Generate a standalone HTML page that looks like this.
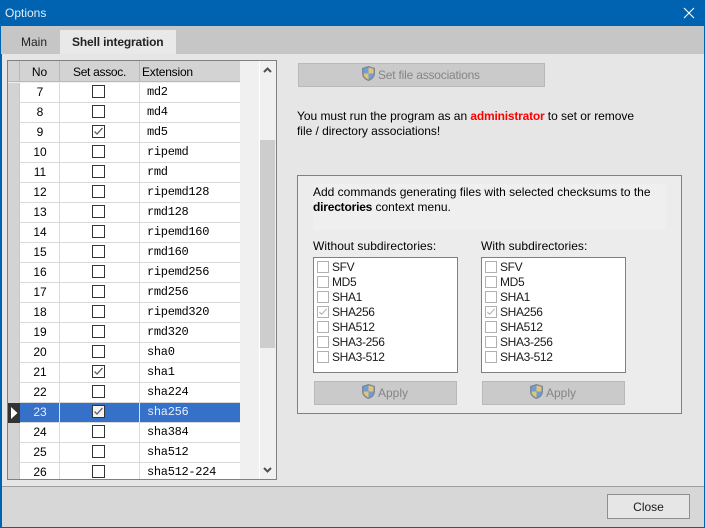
<!DOCTYPE html>
<html><head><meta charset="utf-8"><style>
*{box-sizing:border-box}
html,body{margin:0;padding:0;width:705px;height:528px;overflow:hidden;background:#e6e6e6}
body{position:relative;font:12px/15px "Liberation Sans",sans-serif;color:#000}
div,span,svg{position:absolute}
.t{white-space:nowrap}
.r{left:8px;width:232px;height:20px;background:#fff;border-bottom:1px solid #d9d9d9}
.r .h{left:0;top:0;width:12px;height:20px;background:#d3d3d3;border-right:1px solid #c8c8c8}
.r .n{left:12px;top:2px;width:40px;text-align:center;border:0}
.r .l1{left:51px;top:0;width:1px;height:19px;background:#d9d9d9}
.r .l2{left:131px;top:0;width:1px;height:19px;background:#d9d9d9}
.r .c{left:84px;top:2px;width:13px;height:13px;border:1px solid #333;background:#fff}
.r .e{left:139px;top:2px;font:12px/15px "Liberation Mono",monospace;letter-spacing:-.3px;white-space:nowrap}
.c svg{left:0;top:0}
.s .n,.s .e{color:#e8eefa}
.s{background:#3571c9}
.s .c{background:#f4f4f4}
.lb{top:257px;width:145px;height:116px;background:#fff;border:1px solid #808080}
.k{left:3px;width:12px;height:12px;border:1px solid #b0b0b0;background:#fff}
.i{left:18px;white-space:nowrap;color:#1a1a1a;letter-spacing:-.35px}
.b{background:#cacaca;border:1px solid #b9b9b9;color:#858585;text-align:center}
</style></head><body>
<div style="left:0;top:0;width:705px;height:528px;border:1px solid #0063b1;border-top:0;border-left:2px solid #0063b1"></div>
<div style="left:0;top:0;width:705px;height:26px;background:#0063b1"></div>
<div class="t" style="left:5px;top:6px;color:#e4eef8">Options</div>
<svg style="left:683px;top:7px" width="12" height="12" viewBox="0 0 12 12"><path d="M1 1L11 11M11 1L1 11" stroke="#fff" stroke-width="1.1" fill="none"/></svg>
<div style="left:1px;top:26px;width:703px;height:28px;background:#c6c6c6"></div>
<div style="left:60px;top:30px;width:116px;height:24px;background:#e9e9e9"></div>
<div class="t" style="left:21px;top:35px;color:#222">Main</div>
<div class="t" style="left:72px;top:35px;font-weight:bold;letter-spacing:-.15px;color:#222">Shell integration</div>

<div style="left:7px;top:60px;width:270px;height:420px;border:1px solid #808080;background:#f0f0f0;overflow:hidden">
 <div style="left:0;top:0;width:232px;height:21px;background:#d3d3d3;border-bottom:1px solid #b8b8b8"></div>
 <div style="left:11px;top:0;width:1px;height:21px;background:#b8b8b8"></div>
 <div style="left:51px;top:0;width:1px;height:21px;background:#b8b8b8"></div>
 <div style="left:131px;top:0;width:1px;height:21px;background:#b8b8b8"></div>
 <div class="t" style="left:12px;top:4px;width:39px;text-align:center">No</div>
 <div class="t" style="left:52px;top:4px;width:79px;text-align:center;letter-spacing:-.3px">Set assoc.</div>
 <div class="t" style="left:134px;top:4px;letter-spacing:-.2px">Extension</div>
 <div style="left:251px;top:0;width:1px;height:418px;background:#fff"></div>
 <div style="left:252px;top:79px;width:15px;height:208px;background:#cdcdcd"></div>
 <svg style="left:255px;top:5px" width="9" height="8" viewBox="0 0 9 8"><path d="M1 6L4.500 2.500L8 6" stroke="#505050" stroke-width="2" fill="none"/></svg>
 <svg style="left:255px;top:405px" width="9" height="8" viewBox="0 0 9 8"><path d="M1 2L4.500 5.500L8 2" stroke="#505050" stroke-width="2" fill="none"/></svg>

 <div class="r" style="left:0;top:22px"><div class="h"></div><div class="l1"></div><div class="l2"></div><span class="n">7</span><span class="c"></span><span class="e">md2</span></div>
 <div class="r" style="left:0;top:42px"><div class="h"></div><div class="l1"></div><div class="l2"></div><span class="n">8</span><span class="c"></span><span class="e">md4</span></div>
 <div class="r" style="left:0;top:62px"><div class="h"></div><div class="l1"></div><div class="l2"></div><span class="n">9</span><span class="c"><svg width="11" height="11" viewBox="0 0 11 11"><path d="M1.500 5.500L4 8L9.500 2" stroke="#666" stroke-width="1.300" fill="none"/></svg></span><span class="e">md5</span></div>
 <div class="r" style="left:0;top:82px"><div class="h"></div><div class="l1"></div><div class="l2"></div><span class="n">10</span><span class="c"></span><span class="e">ripemd</span></div>
 <div class="r" style="left:0;top:102px"><div class="h"></div><div class="l1"></div><div class="l2"></div><span class="n">11</span><span class="c"></span><span class="e">rmd</span></div>
 <div class="r" style="left:0;top:122px"><div class="h"></div><div class="l1"></div><div class="l2"></div><span class="n">12</span><span class="c"></span><span class="e">ripemd128</span></div>
 <div class="r" style="left:0;top:142px"><div class="h"></div><div class="l1"></div><div class="l2"></div><span class="n">13</span><span class="c"></span><span class="e">rmd128</span></div>
 <div class="r" style="left:0;top:162px"><div class="h"></div><div class="l1"></div><div class="l2"></div><span class="n">14</span><span class="c"></span><span class="e">ripemd160</span></div>
 <div class="r" style="left:0;top:182px"><div class="h"></div><div class="l1"></div><div class="l2"></div><span class="n">15</span><span class="c"></span><span class="e">rmd160</span></div>
 <div class="r" style="left:0;top:202px"><div class="h"></div><div class="l1"></div><div class="l2"></div><span class="n">16</span><span class="c"></span><span class="e">ripemd256</span></div>
 <div class="r" style="left:0;top:222px"><div class="h"></div><div class="l1"></div><div class="l2"></div><span class="n">17</span><span class="c"></span><span class="e">rmd256</span></div>
 <div class="r" style="left:0;top:242px"><div class="h"></div><div class="l1"></div><div class="l2"></div><span class="n">18</span><span class="c"></span><span class="e">ripemd320</span></div>
 <div class="r" style="left:0;top:262px"><div class="h"></div><div class="l1"></div><div class="l2"></div><span class="n">19</span><span class="c"></span><span class="e">rmd320</span></div>
 <div class="r" style="left:0;top:282px"><div class="h"></div><div class="l1"></div><div class="l2"></div><span class="n">20</span><span class="c"></span><span class="e">sha0</span></div>
 <div class="r" style="left:0;top:302px"><div class="h"></div><div class="l1"></div><div class="l2"></div><span class="n">21</span><span class="c"><svg width="11" height="11" viewBox="0 0 11 11"><path d="M1.500 5.500L4 8L9.500 2" stroke="#666" stroke-width="1.300" fill="none"/></svg></span><span class="e">sha1</span></div>
 <div class="r" style="left:0;top:322px"><div class="h"></div><div class="l1"></div><div class="l2"></div><span class="n">22</span><span class="c"></span><span class="e">sha224</span></div>
 <div class="r s" style="left:0;top:342px"><div class="h" style="background:#333;border-right:0;height:20px"></div><svg style="left:3px;top:4px" width="7" height="12" viewBox="0 0 7 12"><path d="M0 0L6.500 6L0 12Z" fill="#fff"/></svg><div class="l1" style="background:#d9e2f2"></div><div class="l2" style="background:#d9e2f2"></div><span class="n">23</span><span class="c"><svg width="11" height="11" viewBox="0 0 11 11"><path d="M1.500 5.500L4 8L9.500 2" stroke="#666" stroke-width="1.300" fill="none"/></svg></span><span class="e">sha256</span></div>
 <div class="r" style="left:0;top:362px"><div class="h"></div><div class="l1"></div><div class="l2"></div><span class="n">24</span><span class="c"></span><span class="e">sha384</span></div>
 <div class="r" style="left:0;top:382px"><div class="h"></div><div class="l1"></div><div class="l2"></div><span class="n">25</span><span class="c"></span><span class="e">sha512</span></div>
 <div class="r" style="left:0;top:402px;border-bottom:0"><div class="h"></div><div class="l1"></div><div class="l2"></div><span class="n">26</span><span class="c"></span><span class="e">sha512-224</span></div>
</div>

<div class="b" style="left:298px;top:63px;width:247px;height:24px"></div>
<svg style="left:361px;top:65px" width="15" height="17" viewBox="0 0 15 17"><path d="M7.500 1L14 3V8.500C14 12 11 15 7.500 16C4 15 1 12 1 8.500V3Z" fill="#7a8899"/><path d="M7.500 2.500V8.500H2.500V3.700Z" fill="#6f9fd0"/><path d="M7.500 2.500L12.500 3.700V8.500H7.500Z" fill="#e3c27a"/><path d="M2.500 8.500H7.500V14.500C5 13.500 2.500 11.500 2.500 8.500Z" fill="#e3c27a"/><path d="M12.500 8.500H7.500V14.500C10 13.500 12.500 11.500 12.500 8.500Z" fill="#6f9fd0"/></svg>
<div class="t" style="left:378px;top:68px;color:#858585;letter-spacing:-.2px">Set file associations</div>

<div class="t" style="left:297px;top:109px;letter-spacing:-.03px">You must run the program as an <b style="color:#f00;letter-spacing:-.2px">administrator</b> to set or remove</div>
<div class="t" style="left:297px;top:124px;letter-spacing:-.03px">file / directory associations!</div>

<div style="left:297px;top:175px;width:385px;height:239px;border:1px solid #808080;background:#ececec"></div>
<div style="left:313px;top:184px;width:353px;height:46px;background:#efefef"></div>
<div class="t" style="left:313px;top:185px">Add commands generating files with selected checksums to the</div>
<div class="t" style="left:313px;top:200px"><b style="letter-spacing:-.2px">directories</b> context menu.</div>
<div class="t" style="left:313px;top:239px;letter-spacing:.05px">Without subdirectories:</div>
<div class="t" style="left:481px;top:239px;letter-spacing:.05px">With subdirectories:</div>

<div class="lb" style="left:313px">
 <span class="k" style="top:3px"></span><span class="i" style="top:2px">SFV</span>
 <span class="k" style="top:18px"></span><span class="i" style="top:17px">MD5</span>
 <span class="k" style="top:33px"></span><span class="i" style="top:32px">SHA1</span>
 <span class="k" style="top:48px"><svg style="left:0;top:0" width="10" height="10" viewBox="0 0 11 11"><path d="M1.500 5.500L4 8L9.500 2" stroke="#b0b0b0" stroke-width="1.200" fill="none"/></svg></span><span class="i" style="top:47px">SHA256</span>
 <span class="k" style="top:63px"></span><span class="i" style="top:62px">SHA512</span>
 <span class="k" style="top:78px"></span><span class="i" style="top:77px">SHA3-256</span>
 <span class="k" style="top:93px"></span><span class="i" style="top:92px">SHA3-512</span>
</div>
<div class="lb" style="left:481px">
 <span class="k" style="top:3px"></span><span class="i" style="top:2px">SFV</span>
 <span class="k" style="top:18px"></span><span class="i" style="top:17px">MD5</span>
 <span class="k" style="top:33px"></span><span class="i" style="top:32px">SHA1</span>
 <span class="k" style="top:48px"><svg style="left:0;top:0" width="10" height="10" viewBox="0 0 11 11"><path d="M1.500 5.500L4 8L9.500 2" stroke="#b0b0b0" stroke-width="1.200" fill="none"/></svg></span><span class="i" style="top:47px">SHA256</span>
 <span class="k" style="top:63px"></span><span class="i" style="top:62px">SHA512</span>
 <span class="k" style="top:78px"></span><span class="i" style="top:77px">SHA3-256</span>
 <span class="k" style="top:93px"></span><span class="i" style="top:92px">SHA3-512</span>
</div>

<div class="b" style="left:314px;top:381px;width:143px;height:24px"></div>
<svg style="left:361px;top:383px" width="15" height="17" viewBox="0 0 15 17"><path d="M7.500 1L14 3V8.500C14 12 11 15 7.500 16C4 15 1 12 1 8.500V3Z" fill="#7a8899"/><path d="M7.500 2.500V8.500H2.500V3.700Z" fill="#6f9fd0"/><path d="M7.500 2.500L12.500 3.700V8.500H7.500Z" fill="#e3c27a"/><path d="M2.500 8.500H7.500V14.500C5 13.500 2.500 11.500 2.500 8.500Z" fill="#e3c27a"/><path d="M12.500 8.500H7.500V14.500C10 13.500 12.500 11.500 12.500 8.500Z" fill="#6f9fd0"/></svg>
<div class="t" style="left:378px;top:386px;color:#858585">Apply</div>
<div class="b" style="left:482px;top:381px;width:143px;height:24px"></div>
<svg style="left:529px;top:383px" width="15" height="17" viewBox="0 0 15 17"><path d="M7.500 1L14 3V8.500C14 12 11 15 7.500 16C4 15 1 12 1 8.500V3Z" fill="#7a8899"/><path d="M7.500 2.500V8.500H2.500V3.700Z" fill="#6f9fd0"/><path d="M7.500 2.500L12.500 3.700V8.500H7.500Z" fill="#e3c27a"/><path d="M2.500 8.500H7.500V14.500C5 13.500 2.500 11.500 2.500 8.500Z" fill="#e3c27a"/><path d="M12.500 8.500H7.500V14.500C10 13.500 12.500 11.500 12.500 8.500Z" fill="#6f9fd0"/></svg>
<div class="t" style="left:546px;top:386px;color:#858585">Apply</div>

<div style="left:2px;top:486px;width:702px;height:41px;background:#d7d7d7;border-top:1px solid #a0a0a0"></div>
<div style="left:607px;top:494px;width:83px;height:25px;background:#e6e6e6;border:1px solid #8f8f8f"></div>
<div class="t" style="left:607px;top:500px;width:83px;text-align:center;color:#1a1a1a">Close</div>
</body></html>
